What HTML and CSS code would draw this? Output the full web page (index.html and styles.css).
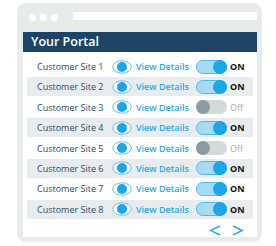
FILE: index.html
```html
<!DOCTYPE html>
<html>
<head>
<meta charset="utf-8">
<link rel="stylesheet" href="styles.css">
</head>
<body>
<div class="frame">
  <div class="titlebar">
    <span class="dot"></span><span class="dot"></span><span class="dot"></span>
    <span class="urlbar"></span>
  </div>
  <div class="panel">
    <div class="header">Your Portal</div>
    <div class="rows">
      <div class="row"><span class="name">Customer Site 1</span><svg class="eye" viewBox="0 0 20 14"><ellipse cx="10" cy="7" rx="9.3" ry="6.2" fill="#fff" stroke="#5cc0ee" stroke-width="1"/><circle cx="10" cy="7" r="5" fill="#1aa6e8"/></svg><span class="link">View Details</span><span class="toggle on"><span class="knob"></span></span><span class="state on">ON</span></div>
      <div class="row alt"><span class="name">Customer Site 2</span><svg class="eye" viewBox="0 0 20 14"><ellipse cx="10" cy="7" rx="9.3" ry="6.2" fill="#fff" stroke="#5cc0ee" stroke-width="1"/><circle cx="10" cy="7" r="5" fill="#1aa6e8"/></svg><span class="link">View Details</span><span class="toggle on"><span class="knob"></span></span><span class="state on">ON</span></div>
      <div class="row"><span class="name">Customer Site 3</span><svg class="eye" viewBox="0 0 20 14"><ellipse cx="10" cy="7" rx="9.3" ry="6.2" fill="#fff" stroke="#5cc0ee" stroke-width="1"/><circle cx="10" cy="7" r="5" fill="#1aa6e8"/></svg><span class="link">View Details</span><span class="toggle off"><span class="knob"></span></span><span class="state off">Off</span></div>
      <div class="row alt"><span class="name">Customer Site 4</span><svg class="eye" viewBox="0 0 20 14"><ellipse cx="10" cy="7" rx="9.3" ry="6.2" fill="#fff" stroke="#5cc0ee" stroke-width="1"/><circle cx="10" cy="7" r="5" fill="#1aa6e8"/></svg><span class="link">View Details</span><span class="toggle on"><span class="knob"></span></span><span class="state on">ON</span></div>
      <div class="row"><span class="name">Customer Site 5</span><svg class="eye" viewBox="0 0 20 14"><ellipse cx="10" cy="7" rx="9.3" ry="6.2" fill="#fff" stroke="#5cc0ee" stroke-width="1"/><circle cx="10" cy="7" r="5" fill="#1aa6e8"/></svg><span class="link">View Details</span><span class="toggle off"><span class="knob"></span></span><span class="state off">Off</span></div>
      <div class="row alt"><span class="name">Customer Site 6</span><svg class="eye" viewBox="0 0 20 14"><ellipse cx="10" cy="7" rx="9.3" ry="6.2" fill="#fff" stroke="#5cc0ee" stroke-width="1"/><circle cx="10" cy="7" r="5" fill="#1aa6e8"/></svg><span class="link">View Details</span><span class="toggle on"><span class="knob"></span></span><span class="state on">ON</span></div>
      <div class="row"><span class="name">Customer Site 7</span><svg class="eye" viewBox="0 0 20 14"><ellipse cx="10" cy="7" rx="9.3" ry="6.2" fill="#fff" stroke="#5cc0ee" stroke-width="1"/><circle cx="10" cy="7" r="5" fill="#1aa6e8"/></svg><span class="link">View Details</span><span class="toggle on"><span class="knob"></span></span><span class="state on">ON</span></div>
      <div class="row alt"><span class="name">Customer Site 8</span><svg class="eye" viewBox="0 0 20 14"><ellipse cx="10" cy="7" rx="9.3" ry="6.2" fill="#fff" stroke="#5cc0ee" stroke-width="1"/><circle cx="10" cy="7" r="5" fill="#1aa6e8"/></svg><span class="link">View Details</span><span class="toggle on"><span class="knob"></span></span><span class="state on">ON</span></div>
    </div>
    <div class="pager">
      <svg class="arrow" viewBox="0 0 12 11"><polyline points="11,1 1.5,5.5 11,10" fill="none" stroke="#29aae1" stroke-width="1.5"/></svg>
      <svg class="arrow" viewBox="0 0 12 11"><polyline points="1,1 10.5,5.5 1,10" fill="none" stroke="#29aae1" stroke-width="1.5"/></svg>
    </div>
  </div>
</div>
</body>
</html>
```

FILE: styles.css
```css
* { box-sizing: border-box; }
html, body { margin: 0; padding: 0; background: #fff; }
body { font-family: "Open Sans", "Liberation Sans", sans-serif; }

.frame {
  margin: 3px 0 0 17px;
  width: 245px;
  height: 239px;
  background: #e8ebec;
  border-radius: 9px;
  padding: 0 5px 5px 6px;
  display: flex;
  flex-direction: column;
}

.titlebar {
  height: 29px;
  display: flex;
  align-items: center;
  padding-left: 6px;
}
.dot {
  width: 7px;
  height: 7px;
  border-radius: 50%;
  background: #fff;
  margin-right: 4px;
}
.urlbar {
  margin-left: 11px;
  width: 184px;
  height: 8px;
  background: #fff;
  margin-top: -4px;
}

.panel {
  flex: 1;
  background: #fff;
  display: flex;
  flex-direction: column;
}
.header {
  height: 20px;
  background: #1d4466;
  color: #fff;
  font-size: 12.5px;
  font-weight: 600;
  line-height: 20px;
  padding-left: 8px;
}
.rows {
  padding: 5px 4px 0 4px;
  display: flex;
  flex-direction: column;
  gap: 1.4px;
}
.row {
  height: 19px;
  display: flex;
  align-items: center;
  padding-left: 10px;
}
.row.alt { background: #e9ecee; }
.name {
  width: 75px;
  font-size: 9px;
  color: #2b4a66;
  white-space: nowrap;
}
.eye {
  width: 20px;
  height: 14px;
  margin-right: 4px;
}
.link {
  width: 60px;
  font-size: 9px;
  font-weight: 600;
  color: #29aae1;
  white-space: nowrap;
}
.toggle {
  width: 31px;
  height: 14px;
  border-radius: 7px;
  display: flex;
  align-items: center;
  margin-right: 3px;
}
.toggle.on {
  background: #a6dbf4;
  border: 1px solid #52bbea;
  justify-content: flex-end;
}
.toggle.off {
  background: #d4d9db;
  justify-content: flex-start;
}
.knob {
  width: 14px;
  height: 14px;
  border-radius: 50%;
}
.toggle.on .knob { background: #1ca6e7; margin-right: -1px; }
.toggle.off .knob { background: #8c9aa1; }
.state { font-size: 9px; }
.state.on { color: #111; font-weight: 700; }
.state.off { color: #a3abaf; }

.pager {
  display: flex;
  justify-content: flex-end;
  gap: 11px;
  padding: 6px 13px 0 0;
}
.arrow { width: 12px; height: 11px; }
```
